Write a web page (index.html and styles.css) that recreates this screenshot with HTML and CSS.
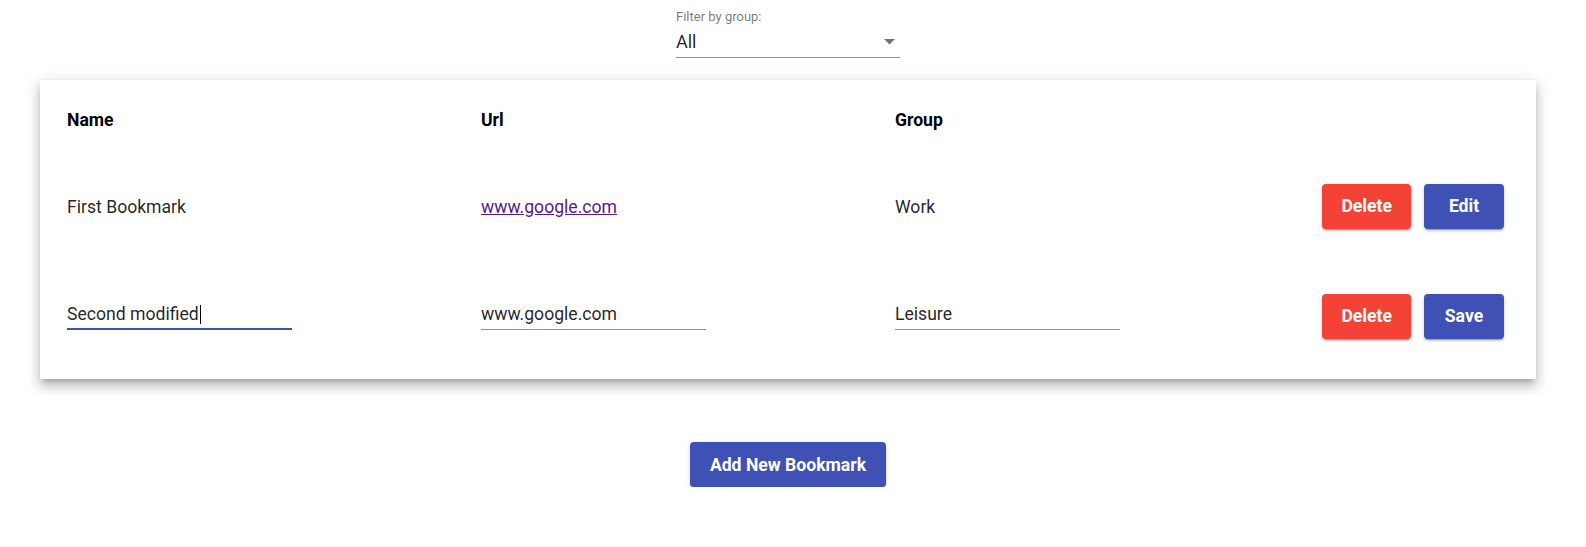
FILE: index.html
```html
<!DOCTYPE html>
<html lang="en">
<head>
<meta charset="utf-8">
<title>Bookmarks</title>
<link rel="stylesheet" href="styles.css">
</head>
<body>
<div class="app">
  <div class="filter">
    <div class="filter-label">Filter by group:</div>
    <div class="select">
      <span class="select-value">All</span>
      <svg class="select-arrow" viewBox="7 10 10 5" width="11" height="5.5"><path d="M7 10l5 5 5-5z" fill="#757575"/></svg>
    </div>
  </div>

  <div class="card">
    <div class="thead">
      <div class="th">Name</div>
      <div class="th">Url</div>
      <div class="th">Group</div>
      <div class="th"></div>
    </div>
    <div class="row">
      <div class="cell">First Bookmark</div>
      <div class="cell"><a class="link" href="#">www.google.com</a></div>
      <div class="cell">Work</div>
      <div class="cell actions">
        <button class="btn btn-red">Delete</button>
        <button class="btn btn-blue">Edit</button>
      </div>
    </div>
    <div class="row">
      <div class="cell field-cell"><div class="field focused"><span class="field-text">Second modified</span><span class="caret"></span></div></div>
      <div class="cell field-cell"><div class="field"><span class="field-text">www.google.com</span></div></div>
      <div class="cell field-cell"><div class="field"><span class="field-text">Leisure</span></div></div>
      <div class="cell actions">
        <button class="btn btn-red">Delete</button>
        <button class="btn btn-blue">Save</button>
      </div>
    </div>
  </div>

  <div class="footer">
    <button class="btn btn-blue btn-add">Add New Bookmark</button>
  </div>
</div>
</body>
</html>
```

FILE: styles.css
```css
* { box-sizing: border-box; }
html, body { margin: 0; padding: 0; background: #fff; }
body {
  font-family: Roboto, "Liberation Sans", Arial, sans-serif;
  color: rgba(0, 0, 0, 0.87);
}
.app {
  margin-left: 40px;
  width: 1496px;
}
.filter {
  width: 224px;
  margin: 0 auto;
  padding-top: 9px;
}
.filter-label {
  font-size: 13px;
  line-height: 15px;
  color: rgba(0, 0, 0, 0.54);
}
.select {
  margin-top: 8px;
  display: flex;
  align-items: center;
  justify-content: space-between;
  padding-bottom: 5px;
  border-bottom: 1px solid rgba(0, 0, 0, 0.42);
}
.select-value {
  font-size: 18px;
  line-height: 20px;
}
.select-arrow {
  display: block;
  margin-right: 5px;
}
.card {
  margin-top: 22px;
  background: #fff;
  padding: 20px 32px 7px 27px;
  box-shadow: 0 5px 5px -3px rgba(0,0,0,.2), 0 8px 10px 1px rgba(0,0,0,.14), 0 3px 14px 2px rgba(0,0,0,.12);
}
.thead, .row {
  display: grid;
  grid-template-columns: 414px 414px 414px 1fr;
  align-items: center;
}
.thead {
  height: 40px;
  margin-bottom: 12px;
}
.th {
  font-size: 17.6px;
  font-weight: 700;
  color: #000;
}
.row {
  height: 110px;
}
.cell {
  font-size: 17.6px;
  line-height: 19px;
}
.link {
  color: #551a8b;
  text-decoration: underline;
}
.field-cell {
  padding-bottom: 6px;
}
.field {
  width: 225px;
  padding: 7px 0 5px;
  border-bottom: 1px solid rgba(0, 0, 0, 0.42);
  line-height: 19px;
  height: 32px;
  display: flex;
  align-items: center;
}
.field.focused {
  border-bottom: 2px solid #3f51b5;
}
.caret {
  display: inline-block;
  width: 1px;
  height: 19px;
  background: #000;
  margin-left: 1px;
}
.actions {
  display: flex;
  justify-content: flex-end;
  gap: 13px;
  margin-top: -2px;
}
.btn {
  height: 45px;
  min-width: 80px;
  padding: 0 19px;
  border: none;
  border-radius: 4px;
  font-family: Roboto, "Liberation Sans", Arial, sans-serif;
  font-size: 17.6px;
  font-weight: 700;
  color: #fff;
  box-shadow: 0 3px 1px -2px rgba(0,0,0,.2), 0 2px 2px 0 rgba(0,0,0,.14), 0 1px 5px 0 rgba(0,0,0,.12);
  cursor: pointer;
}
.btn-red { background: #f44336; }
.btn-blue { background: #3f51b5; }
.footer {
  display: flex;
  justify-content: center;
  margin-top: 63px;
}
.btn-add {
  padding: 0 20px;
}
```
